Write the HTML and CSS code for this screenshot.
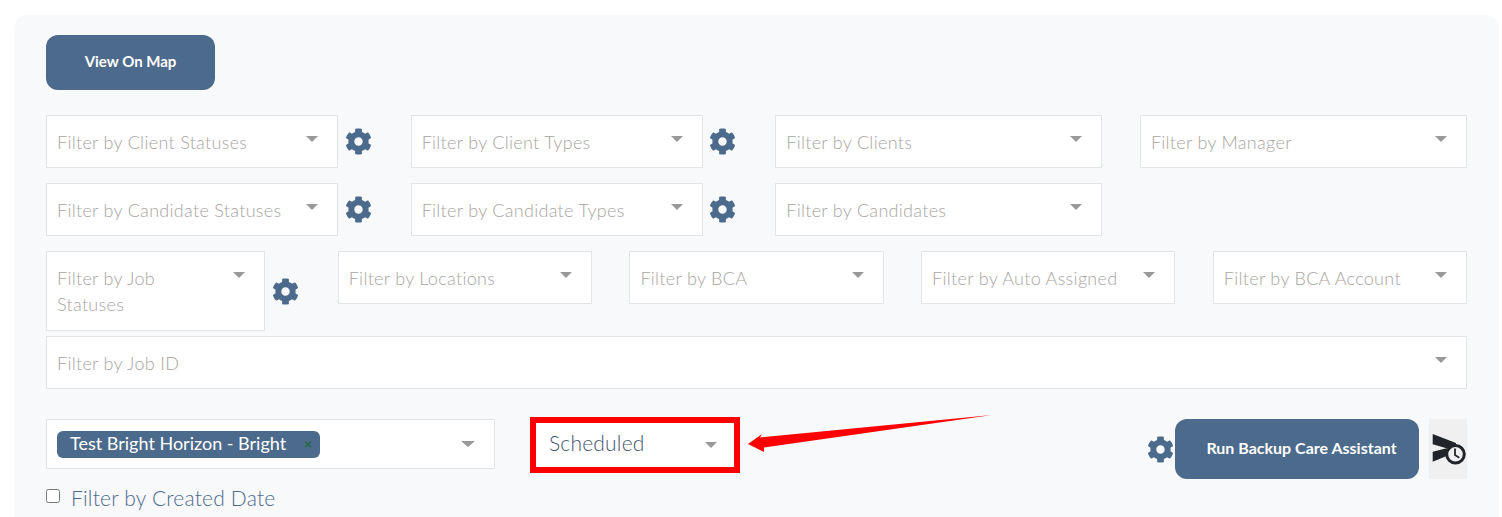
FILE: index.html
```html
<!DOCTYPE html>
<html>
<head>
    <meta http-equiv="Content-Type" content="text/html; charset=utf-8"/>
    <title>Jobs</title>
    <link rel="stylesheet" href="styles.css">
</head>

<body>
<svg class="defs" width="0" height="0">
    <symbol id="cog" viewBox="0 0 512 512">
        <path d="M487.4 315.7l-42.6-24.6c4.3-23.2 4.3-47 0-70.2l42.6-24.6c4.9-2.8 7.1-8.6 5.5-14-11.1-35.6-30-67.8-54.7-94.6-3.8-4.1-10-5.1-14.8-2.3L380.8 110c-17.9-15.4-38.5-27.3-60.8-35.1V25.8c0-5.6-3.9-10.5-9.4-11.7-36.7-8.2-74.3-7.8-109.2 0-5.5 1.2-9.4 6.1-9.4 11.7V75c-22.2 7.9-42.8 19.8-60.8 35.1L88.7 85.5c-4.9-2.8-11-1.9-14.8 2.3-24.7 26.7-43.6 58.9-54.7 94.6-1.7 5.4.6 11.2 5.5 14L67.3 221c-4.3 23.2-4.3 47 0 70.2l-42.6 24.6c-4.9 2.8-7.1 8.6-5.5 14 11.1 35.6 30 67.8 54.7 94.6 3.8 4.1 10 5.1 14.8 2.3l42.6-24.6c17.9 15.4 38.5 27.3 60.8 35.1v49.2c0 5.6 3.9 10.5 9.4 11.7 36.7 8.2 74.3 7.8 109.2 0 5.5-1.2 9.4-6.1 9.4-11.7v-49.2c22.2-7.9 42.8-19.8 60.8-35.1l42.6 24.6c4.9 2.8 11 1.9 14.8-2.3 24.7-26.7 43.6-58.9 54.7-94.6 1.5-5.5-.7-11.3-5.6-14.1zM256 336c-44.1 0-80-35.9-80-80s35.9-80 80-80 80 35.9 80 80-35.9 80-80 80z"/>
    </symbol>
</svg>

<div class="card">
    <button class="btn btn-map">View On Map</button>

    <div class="row row-four">
        <div class="with-cog">
            <div class="field"><span class="ph">Filter by Client Statuses</span><i class="caret"></i></div>
            <svg class="cog"><use href="#cog"/></svg>
        </div>
        <div class="with-cog">
            <div class="field"><span class="ph">Filter by Client Types</span><i class="caret"></i></div>
            <svg class="cog"><use href="#cog"/></svg>
        </div>
        <div class="field"><span class="ph">Filter by Clients</span><i class="caret"></i></div>
        <div class="field"><span class="ph">Filter by Manager</span><i class="caret"></i></div>
    </div>

    <div class="row row-four">
        <div class="with-cog">
            <div class="field"><span class="ph">Filter by Candidate Statuses</span><i class="caret"></i></div>
            <svg class="cog"><use href="#cog"/></svg>
        </div>
        <div class="with-cog">
            <div class="field"><span class="ph">Filter by Candidate Types</span><i class="caret"></i></div>
            <svg class="cog"><use href="#cog"/></svg>
        </div>
        <div class="field"><span class="ph">Filter by Candidates</span><i class="caret"></i></div>
    </div>

    <div class="row row-five row-tight">
        <div class="with-cog">
            <div class="field field-tall"><span class="ph">Filter by Job Statuses</span><i class="caret"></i></div>
            <svg class="cog"><use href="#cog"/></svg>
        </div>
        <div class="field"><span class="ph">Filter by Locations</span><i class="caret"></i></div>
        <div class="field"><span class="ph">Filter by BCA</span><i class="caret"></i></div>
        <div class="field"><span class="ph">Filter by Auto Assigned</span><i class="caret"></i></div>
        <div class="field"><span class="ph">Filter by BCA Account</span><i class="caret"></i></div>
    </div>

    <div class="row row-wide">
        <div class="field"><span class="ph">Filter by Job ID</span><i class="caret"></i></div>
    </div>

    <div class="bottom">
        <div class="client-col">
            <div class="client-select">
                <span class="chip">Test Bright Horizon - Bright<span class="chip-x">×</span></span>
                <i class="caret"></i>
            </div>
            <label class="check"><input type="checkbox"/>Filter by Created Date</label>
        </div>

        <div class="status-select">
            <span class="status-text">Scheduled</span>
            <i class="caret"></i>
        </div>

        <div class="actions">
            <svg class="cog cog-run"><use href="#cog"/></svg>
            <button class="btn btn-run">Run Backup Care Assistant</button>
            <div class="schedule">
                <svg width="38" height="60" viewBox="0 0 38 60">
                    <path d="M3.700 15L27 24L27 32L17.500 29.300L3.700 25.300Z M3.700 32.700L17.500 29.300L20 36L3.700 42.700Z" fill="#212529"/>
                    <circle cx="26.500" cy="35.300" r="8.800" fill="#f0f0f0" stroke="#212529" stroke-width="3"/>
                    <path d="M26 29.500V36L30.300 38.700" fill="none" stroke="#212529" stroke-width="1.800"/>
                </svg>
            </div>
        </div>
    </div>

    <!-- annotation drawn on the screenshot -->
    <svg class="arrow" width="260" height="50" viewBox="0 0 260 50">
        <polygon points="14,34 28,24 26,27.500 258,5 30,37.500 30,42" fill="#ff0000"/>
    </svg>
</div>
</body>
</html>
```

FILE: styles.css
```css
* {
    margin: 0;
    padding: 0;
    box-sizing: border-box;
}

html, body {
    height: 517px;
    overflow: hidden;
}

body {
    background: #fff;
    padding: 15px 3px 0 14px;
    font-family: "Lato", "Open Sans", sans-serif;
}

.defs {
    position: absolute;
}

.card {
    position: relative;
    background: #f8f9fb;
    border-radius: 14px;
    padding: 20px 32px 40px;
    min-height: 600px;
}

.btn {
    display: block;
    border: 0;
    background: #4c6a8c;
    color: #fff;
    font-family: inherit;
    font-weight: 700;
    font-size: 15px;
    border-radius: 12px;
}

.btn-map {
    width: 169px;
    height: 55px;
    padding-bottom: 3px;
    margin-bottom: 25px;
}

.row {
    display: grid;
    column-gap: 37.5px;
    margin-bottom: 15px;
    align-items: start;
}

.row-four {
    grid-template-columns: repeat(4, 1fr);
}

.row-five {
    grid-template-columns: repeat(5, 1fr);
}

.row-tight {
    margin-bottom: 5px;
}

.row-wide {
    margin-bottom: 30px;
}

.with-cog {
    display: flex;
    align-items: center;
}

.with-cog .field {
    flex: 1;
    min-width: 0;
}

.cog {
    width: 27px;
    height: 27px;
    flex: none;
    fill: #4c6a8c;
}

.with-cog .cog {
    margin-left: 6.5px;
    margin-right: 1.5px;
}

.field {
    display: flex;
    justify-content: space-between;
    min-height: 53px;
    background: #fff;
    border: 1px solid #e3e5e8;
    padding: 12.5px 19px 12px 10px;
    line-height: 26px;
    font-size: 18px;
    font-weight: 300;
    letter-spacing: .3px;
    color: #a8a5a2;
}

.field-tall {
    min-height: 80px;
}

.ph {
    padding-right: 14px;
}

.caret {
    display: block;
    flex: none;
    width: 0;
    height: 0;
    margin-top: 7.5px;
    border-left: 6px solid transparent;
    border-right: 6px solid transparent;
    border-top: 6px solid #999;
}

.bottom {
    display: flex;
    align-items: flex-start;
}

.client-col {
    width: 449px;
}

.client-select {
    display: flex;
    align-items: center;
    justify-content: space-between;
    height: 50px;
    background: #fff;
    border: 1px solid #e3e5e8;
    padding: 0 19px 0 10px;
}

.client-select .caret {
    margin-top: 0;
    border-left-width: 7px;
    border-right-width: 7px;
}

.chip {
    display: flex;
    align-items: center;
    width: 263px;
    height: 27px;
    padding: 0 0 2px 13px;
    background: #4c6a8c;
    border-radius: 6px;
    color: #fff;
    font-size: 18px;
}

.chip-x {
    margin-left: auto;
    margin-right: 8px;
    color: #1f6b3f;
    font-weight: 700;
    font-size: 14px;
}

.check {
    display: flex;
    align-items: center;
    margin-top: 15px;
    color: #4c6a8c;
    font-size: 21px;
    font-weight: 300;
    letter-spacing: .2px;
    line-height: 28px;
}

.check input {
    width: 14px;
    height: 14px;
    margin: 0 11px 5px 0;
}

.status-select {
    display: flex;
    align-items: center;
    justify-content: space-between;
    width: 210px;
    height: 56px;
    margin: -2px 0 0 35px;
    background: #fff;
    border: 6px solid #ff0000;
    padding: 0 16px 0 13px;
}

.status-select .caret {
    margin: 0 1px 0 0;
}

.status-text {
    padding-bottom: 5px;
    color: #44566f;
    font-size: 21px;
    font-weight: 300;
    letter-spacing: .2px;
}

.actions {
    display: flex;
    align-items: center;
    margin-left: auto;
}

.cog-run {
    margin-right: 1px;
}

.btn-run {
    width: 244px;
    height: 60px;
    padding: 0 0 4px 9px;
    margin-right: 10px;
    font-size: 16px;
}

.schedule {
    width: 38px;
    height: 60px;
    background: #f0f0f0;
}

.schedule svg {
    display: block;
}

.arrow {
    position: absolute;
    left: 720px;
    top: 395px;
}
```
